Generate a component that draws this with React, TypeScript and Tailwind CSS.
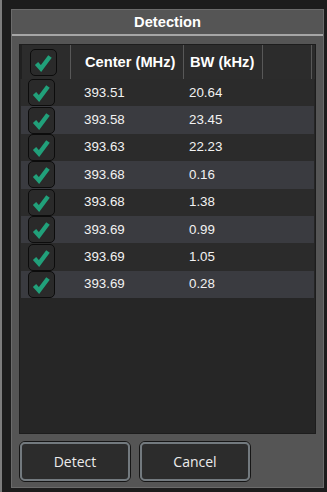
const ROWS: [string, string][] = [
  ["393.51", "20.64"],
  ["393.58", "23.45"],
  ["393.63", "22.23"],
  ["393.68", "0.16"],
  ["393.68", "1.38"],
  ["393.69", "0.99"],
  ["393.69", "1.05"],
  ["393.69", "0.28"],
];

function Check({ className = "" }: { className?: string }) {
  return (
    <div
      className={`w-[27px] h-[27px] rounded-[5px] border border-[#0c0c0c] bg-[#2a2a2a] flex items-center justify-center ${className}`}
    >
      <svg width="25" height="25" viewBox="0 0 25 25">
        <path
          d="M5.5 13.5 L10 18.5 L19 6.5"
          fill="none"
          stroke="#21a07a"
          strokeWidth="4.4"
          strokeLinejoin="miter"
        />
      </svg>
    </div>
  );
}

function Button({ label }: { label: string }) {
  return (
    <button className="w-[112px] h-[41px] rounded-[6px] border border-[#161616] p-0">
      <div className="w-full h-full rounded-[5px] border-2 border-[#737a7f] bg-[#2c2c2c] flex items-center justify-center text-[14px] text-[#ececec] font-['Open_Sans',sans-serif] pb-[1px]">
        {label}
      </div>
    </button>
  );
}

export default function App() {
  return (
    <div className="w-[327px] h-[492px] bg-[#1c1c1c] flex overflow-hidden">
      <div className="w-[2px] h-full bg-[#7c7c7c]" />
      <div className="pl-[9px] pt-[9px]">
        <div className="w-[313px] h-[479px] bg-[#555555] border border-[#6b6b6b] flex flex-col">
          <div className="h-[24px] flex items-center justify-center text-[14.67px] font-bold text-white font-['Liberation_Sans',Arial,sans-serif]">
            Detection
          </div>
          <div className="h-[2px] bg-[#a6a6a6]" />
          <div className="px-[7px] pt-[8px]">
            <div className="h-[390px] bg-[#262626] border border-[#1d1d1d] flex flex-col font-['Liberation_Sans',Arial,sans-serif]">
              <div className="h-[34px] flex bg-[#2c2c2c] border-l-2 border-[#202020]">
                <div className="w-[49px] flex items-center pl-[8px] border-r border-[#585858]">
                  <Check />
                </div>
                <div className="w-[113px] flex items-center pl-[14px] text-[14.67px] font-bold text-white border-r border-[#585858] whitespace-nowrap">
                  Center (MHz)
                </div>
                <div className="w-[79px] flex items-center pl-[6px] text-[14.67px] font-bold text-white border-r border-[#585858] whitespace-nowrap">
                  BW (kHz)
                </div>
                <div className="w-[49px] border-r border-[#585858]" />
              </div>
              {ROWS.map(([c, bw], i) => (
                <div
                  key={i}
                  className={`h-[27.4px] mx-[1px] flex items-center ${
                    i % 2 === 1 ? "bg-[#3a3b40]" : "bg-[#2b2b2b]"
                  }`}
                >
                  <div className="w-[49px] pl-[7px]">
                    <Check />
                  </div>
                  <div className="w-[113px] pl-[14px] text-[13.33px] text-[#f2f2f2]">
                    {c}
                  </div>
                  <div className="pl-[6px] text-[13.33px] text-[#f2f2f2]">{bw}</div>
                </div>
              ))}
            </div>
          </div>
          <div className="flex gap-[8px] px-[7px] pt-[7px]">
            <Button label="Detect" />
            <Button label="Cancel" />
          </div>
        </div>
      </div>
    </div>
  );
}
